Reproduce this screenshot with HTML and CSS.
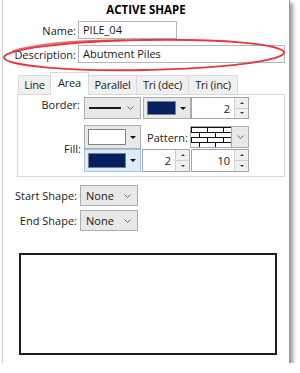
FILE: index.html
```html
<!DOCTYPE html>
<html lang="en">
<head>
    <meta charset="UTF-8">
    <meta name="viewport" content="width=device-width, initial-scale=1.0">
    <title>Active Shape</title>
    <link rel="stylesheet" href="styles.css">
</head>
<body>
    <div class="panel">
        <!-- red hand-drawn marker round the description field -->
        <svg class="marker" width="300" height="80" viewBox="0 0 300 80">
            <ellipse cx="144" cy="55" rx="140" ry="15" transform="rotate(-1 144 55)" fill="none" stroke="#e4393e" stroke-width="1.9"/>
            <path d="M12 51 C 40 43, 80 40, 125 40" fill="none" stroke="#e4393e" stroke-width="1.3" opacity="0.75"/>
        </svg>

        <div class="title">ACTIVE SHAPE</div>

        <div class="field-row name-row">
            <span class="field-label">Name:</span>
            <div class="textbox name-box">PILE_04</div>
        </div>
        <div class="field-row desc-row">
            <span class="field-label">Description:</span>
            <div class="textbox desc-box">Abutment Piles</div>
        </div>

        <div class="tabs">
            <div class="tab tab-line">Line</div>
            <div class="tab tab-area active">Area</div>
            <div class="tab tab-parallel">Parallel</div>
            <div class="tab tab-dec">Tri (dec)</div>
            <div class="tab tab-inc">Tri (inc)</div>
        </div>

        <div class="tab-body">
            <div class="prop-grid">
                <span class="prop-label">Border:</span>
                <div class="combo line-combo">
                    <span class="line-sample"></span>
                    <svg class="chev" width="7" height="4" viewBox="0 0 7 4"><path d="M0.5 0.5 L3.5 3.5 L6.5 0.5" fill="none" stroke="#6b6b6b"/></svg>
                </div>
                <div class="combo color-combo">
                    <span class="swatch navy"></span>
                    <span class="arrow"></span>
                </div>
                <div class="spin">
                    <span class="spin-value">2</span>
                    <span class="spin-buttons"><span class="spin-up"></span><span class="spin-down"></span></span>
                </div>

                <span class="prop-label fill-label">Fill:</span>
                <div class="combo color-combo fill-combo">
                    <span class="swatch white"></span>
                    <span class="arrow"></span>
                </div>
                <span class="prop-label pattern-label">Pattern:</span>
                <div class="pattern-combo">
                    <svg class="bricks" width="42" height="22" viewBox="0 0 42 22">
                        <defs>
                            <pattern id="brick" width="16" height="10" patternUnits="userSpaceOnUse" x="1" y="1">
                                <path d="M0 0.5 H16 M0 5.5 H16 M0.5 0 V5 M8.5 5 V10" stroke="#111" stroke-width="1" fill="none"/>
                            </pattern>
                        </defs>
                        <rect x="0" y="0" width="42" height="22" fill="#fff"/>
                        <rect x="1" y="1" width="40" height="20" fill="url(#brick)"/>
                        <rect x="0.5" y="0.5" width="41" height="21" fill="none" stroke="#a8a8a8"/>
                    </svg>
                    <span class="drop-btn">
                        <svg class="chev" width="7" height="4" viewBox="0 0 7 4"><path d="M0.5 0.5 L3.5 3.5 L6.5 0.5" fill="none" stroke="#6b6b6b"/></svg>
                    </span>
                </div>
                <div class="combo color-combo fill-combo hover">
                    <span class="swatch navy"></span>
                    <span class="arrow"></span>
                </div>
                <div class="spin spin-mid">
                    <span class="spin-value">2</span>
                    <span class="spin-buttons"><span class="spin-up"></span><span class="spin-down"></span></span>
                </div>
                <div class="spin">
                    <span class="spin-value">10</span>
                    <span class="spin-buttons"><span class="spin-up"></span><span class="spin-down"></span></span>
                </div>
            </div>
        </div>

        <div class="shape-rows">
            <div class="shape-row">
                <span class="shape-label">Start Shape:</span>
                <div class="combo shape-combo">None
                    <svg class="chev" width="7" height="4" viewBox="0 0 7 4"><path d="M0.5 0.5 L3.5 3.5 L6.5 0.5" fill="none" stroke="#6b6b6b"/></svg>
                </div>
            </div>
            <div class="shape-row">
                <span class="shape-label">End Shape:</span>
                <div class="combo shape-combo">None
                    <svg class="chev" width="7" height="4" viewBox="0 0 7 4"><path d="M0.5 0.5 L3.5 3.5 L6.5 0.5" fill="none" stroke="#6b6b6b"/></svg>
                </div>
            </div>
        </div>

        <div class="preview"></div>
    </div>
</body>
</html>
```

FILE: styles.css
```css
body {
    margin: 0;
    background: #fff;
    font-family: "Open Sans", "Noto Sans", sans-serif;
    font-size: 11px;
    color: #1a1a1a;
}
.panel {
    position: relative;
    width: 288px;
    height: 363px;
    margin-left: 2px;
    box-sizing: border-box;
    background: #fff;
    border-left: 1px solid #cfcfcf;
    border-right: 1px solid #9a9a9a;
    box-shadow: 3px 3px 4px rgba(0,0,0,0.4);
}
.marker {
    position: absolute;
    left: -3px;
    top: 0;
    pointer-events: none;
    z-index: 2;
}
.title {
    height: 20px;
    line-height: 20px;
    text-align: center;
    font-weight: 700;
    font-size: 11.5px;
    color: #000;
}
.field-row {
    display: flex;
    align-items: center;
    gap: 2px;
    height: 18px;
}
.name-row {
    margin-top: 1px;
}
.desc-row {
    margin-top: 6px;
}
.field-label {
    width: 73px;
    text-align: right;
}
.textbox {
    height: 18px;
    box-sizing: border-box;
    border: 1px solid #b4b6bc;
    padding-left: 4px;
    line-height: 16px;
}
.name-box {
    width: 99px;
}
.desc-box {
    width: 207px;
}

/* tabs */
.tabs {
    display: flex;
    align-items: flex-end;
    height: 22px;
    margin: 9px 0 0 15px;
}
.tab {
    height: 19px;
    box-sizing: border-box;
    border: 1px solid #d9d9d9;
    border-bottom: none;
    background: #f0f0f0;
    text-align: center;
    line-height: 17px;
    letter-spacing: -0.2px;
    white-space: nowrap;
    margin-right: -1px;
}
.tab.active {
    position: relative;
    z-index: 1;
    height: 23px;
    margin-bottom: -1px;
    background: #fff;
    line-height: 20px;
}
.tab-line { width: 33px; }
.tab-area { width: 39px; }
.tab-parallel { width: 49px; }
.tab-dec { width: 53px; }
.tab-inc { width: 50px; }

.tab-body {
    width: 268px;
    margin-left: 14px;
    box-sizing: border-box;
    border: 1px solid #d9d9d9;
    padding: 2px 0 4px 0;
}
.prop-grid {
    display: grid;
    grid-template-columns: 66px 58px 49px 58px;
    grid-template-rows: 28px 24px 23px;
}
.prop-label {
    align-self: center;
    text-align: right;
    padding-right: 4px;
}
.prop-grid > :nth-child(-n+4) {
    align-self: start;
    height: 22px;
}
.fill-label {
    grid-row: 2 / 4;
    padding-right: 3px;
}
.pattern-label {
    padding-right: 3px;
}

/* combo boxes */
.combo {
    display: flex;
    align-items: center;
    box-sizing: border-box;
    border: 1px solid #adadad;
    background: #e8e8e8;
}
.line-combo {
    margin-right: 1px;
    padding: 0 6px 0 4px;
    justify-content: space-between;
}
.line-sample {
    width: 32px;
    height: 2px;
    background: #1a1a1a;
}
.color-combo {
    margin-left: 1px;
    padding: 3px 4px 3px 3px;
    gap: 4px;
}
.fill-combo {
    margin: 0 1px 0 0;
}
.fill-combo.hover {
    background: #dcecfc;
    border-color: #9cc4ec;
}
.swatch {
    flex: 1;
    align-self: stretch;
    box-sizing: border-box;
    border: 1px solid #808080;
}
.swatch.navy { background: #062160; }
.swatch.white { background: #fff; }
.arrow {
    width: 0;
    height: 0;
    border-left: 3px solid transparent;
    border-right: 3px solid transparent;
    border-top: 3px solid #111;
}

/* numeric spinners */
.spin {
    display: flex;
    box-sizing: border-box;
    border: 1px solid #a5a5a5;
    background: #fff;
}
.spin-mid {
    margin-right: 1px;
}
.spin-value {
    flex: 1;
    text-align: right;
    padding-right: 4px;
    align-self: center;
}
.spin-buttons {
    width: 13px;
    display: flex;
    flex-direction: column;
    border-left: 1px solid #d0d0d0;
}
.spin-up, .spin-down {
    flex: 1;
    display: flex;
    align-items: center;
    justify-content: center;
    background: #f0f0f0;
}
.spin-up {
    border-bottom: 1px solid #d0d0d0;
}
.spin-up::after, .spin-down::after {
    content: "";
    border-left: 2px solid transparent;
    border-right: 2px solid transparent;
}
.spin-up::after { border-bottom: 2px solid #333; }
.spin-down::after { border-top: 2px solid #333; }

/* pattern picker */
.pattern-combo {
    display: flex;
    margin-left: -1px;
    height: 22px;
    align-self: start;
    margin-top: 1px;
}
.bricks {
    display: block;
}
.drop-btn {
    flex: 1;
    display: flex;
    align-items: center;
    justify-content: center;
    box-sizing: border-box;
    border: 1px solid #adadad;
    border-left: none;
    background: #e8e8e8;
}

/* start / end shape */
.shape-rows {
    display: flex;
    flex-direction: column;
    gap: 4px;
    margin-top: 8px;
}
.shape-row {
    display: flex;
    align-items: center;
    gap: 3px;
    height: 21px;
}
.shape-label {
    width: 74px;
    text-align: right;
}
.shape-combo {
    width: 58px;
    height: 21px;
    padding: 0 6px 0 5px;
    justify-content: space-between;
}

.preview {
    width: 258px;
    height: 102px;
    margin: 22px 0 0 16px;
    box-sizing: border-box;
    border: 2px solid #1e1e1e;
}
```
